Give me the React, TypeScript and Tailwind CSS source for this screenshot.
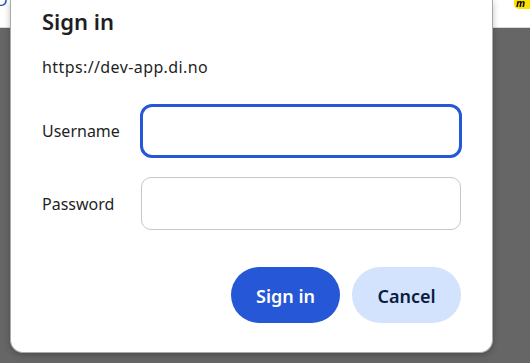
import React, { JSX } from 'react';

const font = { fontFamily: '"Noto Sans", "Open Sans", Arial, sans-serif' };

export default function App(): JSX.Element {
  return (
    <div className="relative w-[530px] h-[363px] overflow-hidden bg-[#666666]" style={font}>
      {/* page behind the dialog */}
      <div className="h-[28px] bg-white border-b border-[#d9d9d9] relative">
        <span className="absolute left-[-4px] top-[-12px] text-[16px] text-[#2a4fa8]">D</span>
        <div className="absolute right-0 top-0 w-[16px] h-[9px] bg-[#ffe100] rounded-bl-[5px] overflow-hidden">
          <span className="block text-[10px] leading-[6px] font-bold italic text-black pl-[2px]">m</span>
        </div>
      </div>

      {/* dialog */}
      <div className="absolute left-[10px] top-0 w-[483px] h-[353px] bg-white rounded-b-[13px] border-x border-b border-[#a9a9a9] shadow-[0_2px_6px_rgba(0,0,0,0.25)] pl-[31px] pr-[30px]">
        <h1 className="text-[22px] leading-[28px] font-semibold text-[#1f1f1f] pt-[7px]">Sign in</h1>
        <p className="text-[16px] leading-[20px] tracking-[0.4px] text-[#1f1f1f] mt-[22px]">https://dev-app.di.no</p>

        <div className="mt-[27px] flex items-center">
          <label className="w-[98px] text-[16px] text-[#1f1f1f]">Username</label>
          <div className="flex-1 h-[54px] rounded-[12px] border-[3px] border-[#2557d6]" />
        </div>
        <div className="mt-[19px] flex items-center">
          <label className="w-[99px] text-[16px] text-[#1f1f1f]">Password</label>
          <div className="flex-1 h-[53px] rounded-[10px] border border-[#c7c7c7] mr-[1px]" />
        </div>

        <div className="mt-[37px] flex justify-end gap-[12px] pr-[1px]">
          <button className="w-[109px] h-[56px] pt-[3px] rounded-full bg-[#2557d6] text-white text-[18px] font-semibold">
            Sign in
          </button>
          <button className="w-[109px] h-[56px] pt-[3px] rounded-full bg-[#d3e3fd] text-[#0a1c3f] text-[18px] font-semibold">
            Cancel
          </button>
        </div>
      </div>
    </div>
  );
}
